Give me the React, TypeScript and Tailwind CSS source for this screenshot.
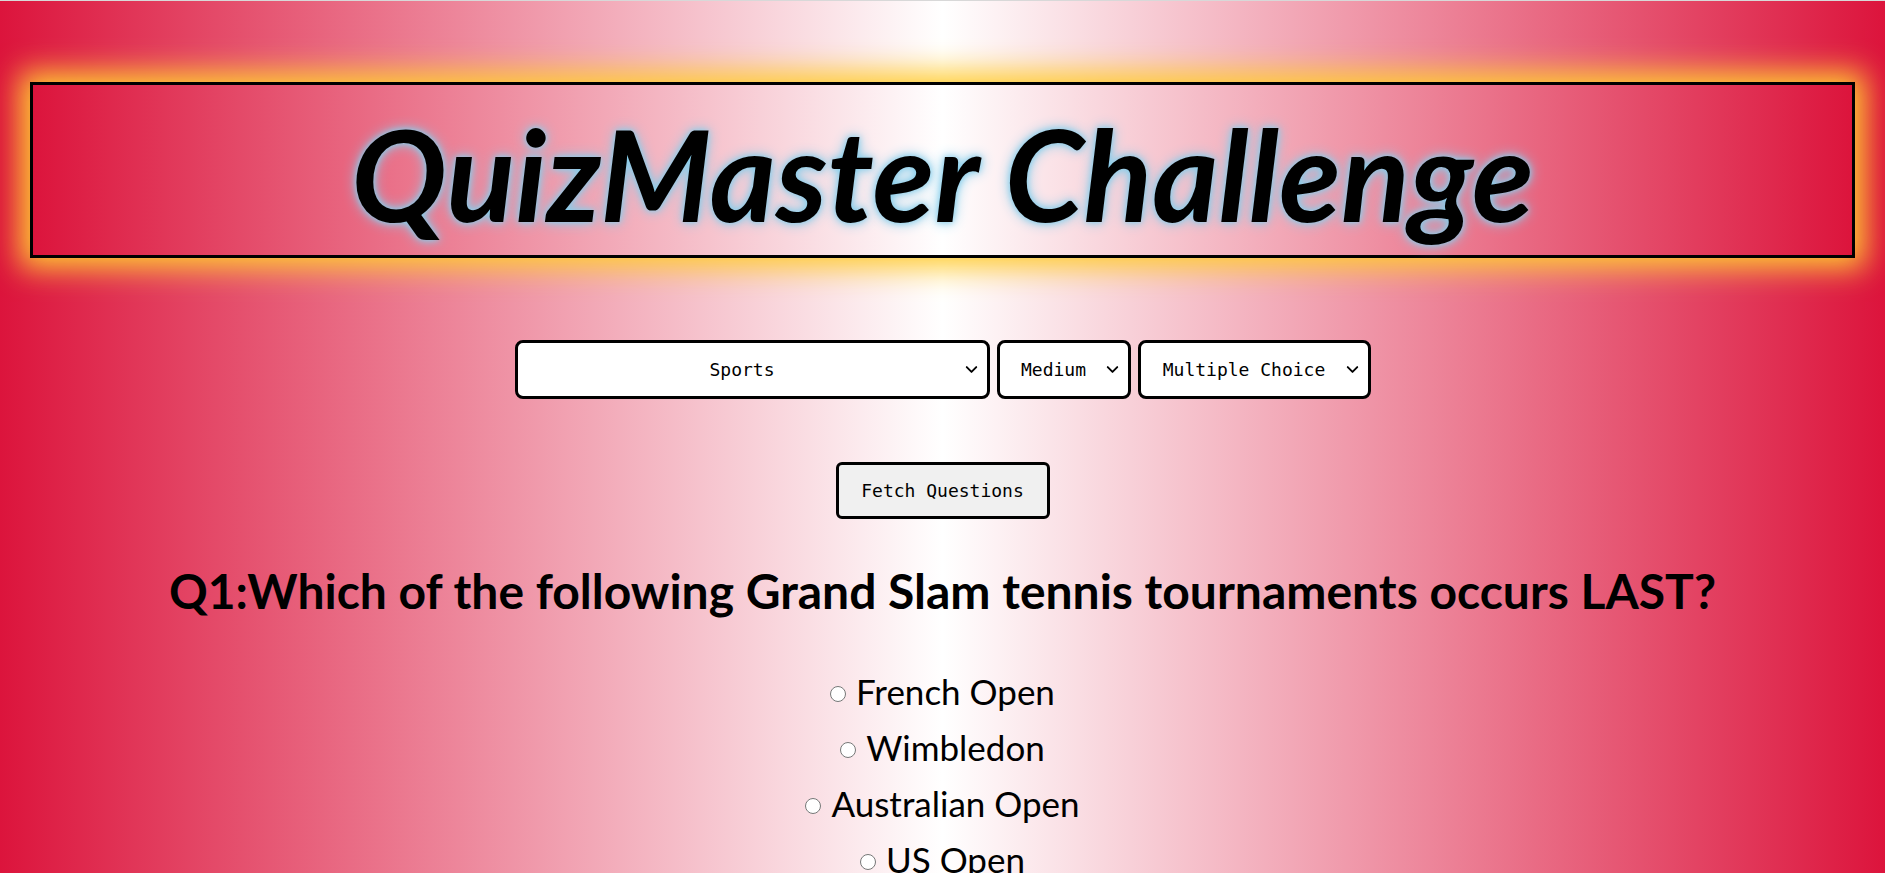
import { useState } from 'react'
import { ChevronDown } from 'lucide-react'

const options = ['French Open', 'Wimbledon', 'Australian Open', 'US Open']

function Picker({ value, width }: { value: string; width: string }) {
  return (
    <div className={`relative ${width}`}>
      <select className="h-[59px] w-full appearance-none rounded-[8px] border-[3px] border-black bg-white pl-3 pr-8 text-center">
        <option>{value}</option>
      </select>
      <ChevronDown className="pointer-events-none absolute right-[9px] top-[20px] h-[19px] w-[19px]" strokeWidth={2.4} />
    </div>
  )
}

export default function App() {
  const [picked, setPicked] = useState('')

  return (
    <div className="min-h-screen border-t border-[#d8d8d8] bg-[linear-gradient(to_right,#dc143c,#ffffff_50%,#dc143c)] font-['Lato','Open_Sans',sans-serif] text-black">
      <div className="px-[30px] pt-[81px]">
        {/* Header */}
        <div className="flex h-[176px] items-center justify-center border-[3px] border-black bg-[linear-gradient(to_right,#dc143c,#ffffff_50%,#dc143c)] shadow-[0_0_28px_10px_#ffcc33]">
          <h1 className="mt-[6px] text-[127px] font-bold italic leading-none [text-shadow:0_0_14px_#87ceeb,0_0_6px_#87ceeb]">
            QuizMaster Challenge
          </h1>
        </div>
      </div>

      {/* Controls */}
      <div className="mt-[82px] flex justify-center gap-[7px] font-['DejaVu_Sans_Mono',monospace] text-[18px]">
        <Picker value="Sports" width="w-[475px]" />
        <Picker value="Medium" width="w-[134px]" />
        <Picker value="Multiple Choice" width="w-[233px]" />
      </div>

      <div className="mt-[63px] flex justify-center">
        <button className="h-[57px] w-[214px] rounded-[6px] border-[3px] border-black bg-[#f0f0f0] font-['DejaVu_Sans_Mono',monospace] text-[18px]">
          Fetch Questions
        </button>
      </div>

      {/* Question */}
      <h2 className="mt-[44px] text-center text-[48px] font-bold leading-[56px]">
        Q1:Which of the following Grand Slam tennis tournaments occurs LAST?
      </h2>

      <div className="mt-[49px] flex flex-col items-center gap-[10px] text-[35px]">
        {options.map((o) => (
          <label key={o} className="flex h-[46px] items-center gap-[10px]">
            <input
              type="radio"
              name="answer"
              checked={picked === o}
              onChange={() => setPicked(o)}
              className="mt-[6px] h-[16px] w-[16px]"
            />
            {o}
          </label>
        ))}
      </div>
    </div>
  )
}
